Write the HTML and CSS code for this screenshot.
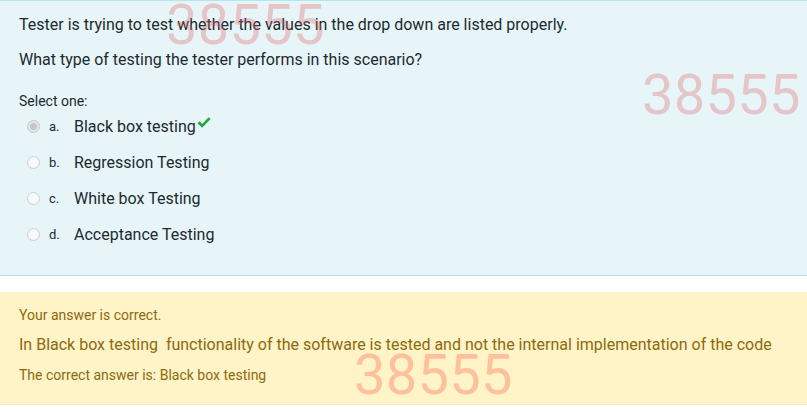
FILE: index.html
```html
<!DOCTYPE html>
<html>
<head>
<meta charset="utf-8">
<link rel="stylesheet" href="styles.css">
</head>
<body>
<div class="page">
  <div class="formulation">
    <div class="qtext">
      <p>Tester is trying to test whether the values in the drop down are listed properly.</p>
      <p>What type of testing the tester performs in this scenario?</p>
    </div>
    <div class="prompt">Select one:</div>
    <div class="answers">
      <div class="opt">
        <span class="radio checked"></span>
        <span class="letter">a.</span>
        <span class="label">Black box testing</span>
        <svg class="tick" width="16" height="14" viewBox="0 0 16 14"><path d="M1.5 7.2 L3.6 5.3 L6.2 7.9 L12.6 1.2 L14.6 3.1 L6.2 11.8 Z" fill="#1fa83b"/></svg>
      </div>
      <div class="opt">
        <span class="radio"></span>
        <span class="letter">b.</span>
        <span class="label">Regression Testing</span>
      </div>
      <div class="opt">
        <span class="radio"></span>
        <span class="letter">c.</span>
        <span class="label">White box Testing</span>
      </div>
      <div class="opt">
        <span class="radio"></span>
        <span class="letter">d.</span>
        <span class="label">Acceptance Testing</span>
      </div>
    </div>
    <div class="wm wm1">38555</div>
    <div class="wm wm2">38555</div>
  </div>
  <div class="outcome">
    <div class="cond">
      <div class="small">Your answer is correct.</div>
      <div class="big">In Black box testing&nbsp; functionality of the software is tested and not the internal implementation of the code</div>
      <div class="small">The correct answer is: Black box testing</div>
    </div>
    <div class="wm wm3">38555</div>
  </div>
</div>
</body>
</html>
```
FILE: styles.css
```css
html, body {
  margin: 0;
  padding: 0;
  background: #ffffff;
}
body {
  font-family: Roboto, "Liberation Sans", sans-serif;
  color: #1b2a2e;
}
.formulation {
  position: relative;
  background: #e7f5f9;
  border-top: 1px solid #b4e6ee;
  border-bottom: 1px solid #b9dfe5;
  height: 274px;
  padding: 0 19px;
  overflow: hidden;
}
.qtext {
  padding-top: 10px;
}
.qtext p {
  margin: 0 0 8px;
  font-size: 16px;
  line-height: 27px;
}
.qtext p:last-child {
  margin-bottom: 0;
}
.prompt {
  font-size: 14px;
  margin-top: 20px;
  margin-bottom: -1px;
  line-height: 16px;
}
.answers {
  display: flex;
  flex-direction: column;
}
.opt {
  display: flex;
  align-items: center;
  height: 36px;
}
.radio {
  width: 11px;
  height: 11px;
  border: 1px solid #c9cfd1;
  border-radius: 50%;
  background: #f7f9fa;
  margin-left: 8px;
  box-sizing: content-box;
  position: relative;
}
.radio.checked {
  background: #e4e6e7;
  border-color: #c4c8ca;
}
.radio.checked::after {
  content: "";
  position: absolute;
  left: 2px;
  top: 2px;
  width: 7px;
  height: 7px;
  border-radius: 50%;
  background: #c4c7c9;
}
.letter {
  font-size: 13px;
  margin-left: 9px;
  width: 25px;
}
.label {
  font-size: 16px;
}
.tick {
  margin-top: -6px;
}
.wm {
  position: absolute;
  font-size: 56px;
  line-height: 1;
  color: rgba(222, 95, 95, 0.32);
  pointer-events: none;
  letter-spacing: 0.3px;
  white-space: nowrap;
}
.wm1 { left: 166px; top: -4px; }
.wm2 { left: 642px; top: 66px; }
.outcome {
  position: relative;
  margin-top: 16px;
  background: #fff3c8;
  border-bottom: 1px solid #f7ebbe;
  height: 112px;
  overflow: hidden;
  color: #8d6a0e;
}
.cond {
  padding: 13px 0 0 19px;
  white-space: nowrap;
}
.small {
  font-size: 14px;
  line-height: 20px;
}
.big {
  font-size: 16px;
  line-height: 24px;
  margin: 8px 0;
}
.wm3 {
  left: 354px;
  top: 55px;
  color: rgba(255, 150, 120, 0.55);
}
```
